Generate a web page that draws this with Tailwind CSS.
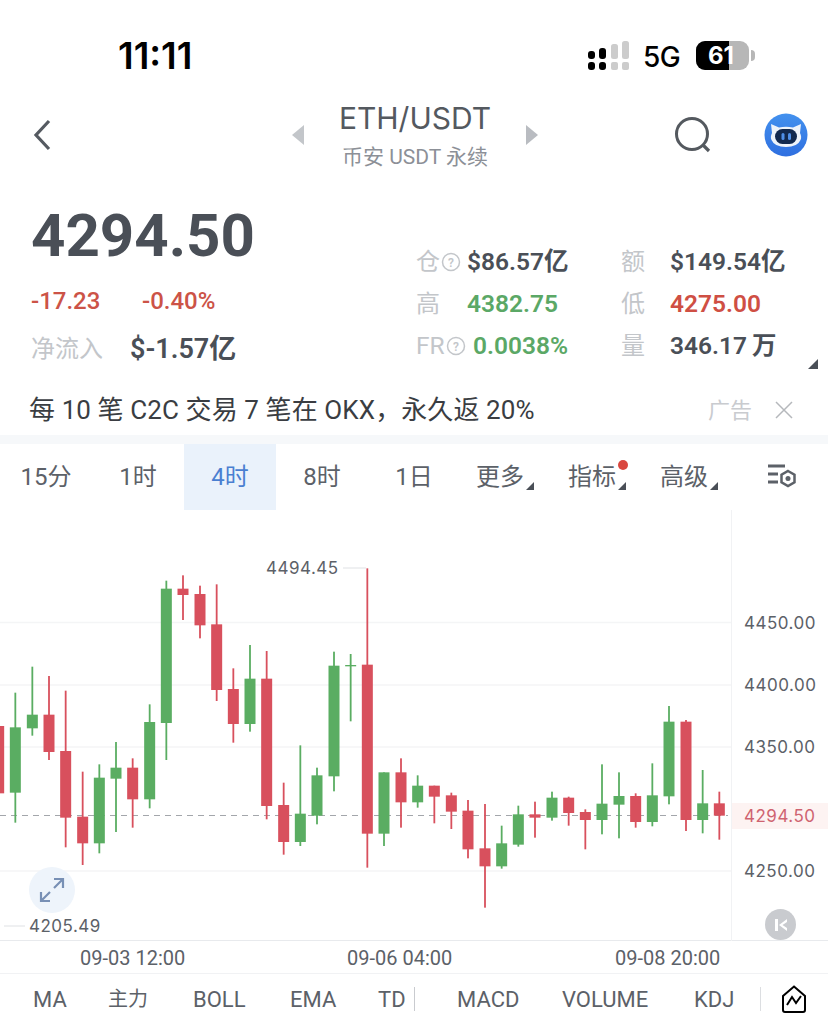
<!DOCTYPE html>
<html lang="zh-CN">
<head>
    <meta charset="UTF-8">
    <meta name="viewport" content="width=device-width, initial-scale=1.0">
    <title>ETH/USDT</title>
    <script src="https://cdn.jsdelivr.net/npm/@tailwindcss/browser@4"></script>
</head>
<body class="bg-white font-['Roboto','Noto_Sans_CJK_SC',sans-serif] text-[#4a4f57]">
<div class="w-[828px] h-[1030px] overflow-hidden flex flex-col">

    <!-- status bar -->
    <div class="h-[100px] shrink-0 flex items-start pt-[36px] relative font-['Inter','Noto_Sans_CJK_SC',sans-serif]">
        <div class="ml-[118px] w-[74px] text-[37px] leading-[40px] font-semibold text-black">11:11</div>
        <svg class="ml-[394px] mt-[3px]" width="44" height="32" viewBox="0 0 44 32">
            <rect x="2" y="12" width="7" height="8" rx="3" fill="#000"/><rect x="2" y="23" width="7" height="8" rx="3" fill="#000"/>
            <rect x="13" y="9" width="7" height="11" rx="3" fill="#000"/><rect x="13" y="23" width="7" height="8" rx="3" fill="#000"/>
            <rect x="25" y="5" width="7" height="15" rx="2.5" fill="#ccc"/><rect x="25" y="23" width="7" height="8" rx="2" fill="#ccc"/>
            <rect x="36" y="2" width="7" height="18" rx="2.5" fill="#ccc"/><rect x="36" y="23" width="7" height="8" rx="2" fill="#ccc"/>
        </svg>
        <div class="ml-[13px] w-[38px] text-[28px] leading-[42px] font-medium text-black tracking-[-0.5px]">5G</div>
        <div class="ml-[15px] mt-[5px] w-[53px] h-[29px] rounded-[9px] overflow-hidden bg-[#b7b7b7] relative">
            <div class="w-[33px] h-full bg-black"></div>
            <div class="absolute inset-0 flex items-center pl-[12px] text-[24px] font-bold text-white">61</div>
        </div>
        <div class="ml-[2px] mt-[14px] w-[4px] h-[11px] rounded-r-full bg-[#b7b7b7]"></div>
    </div>

    <!-- nav -->
    <div class="h-[90px] shrink-0 flex items-center">
        <div class="w-[292px] pl-[33px] pb-[21px]">
            <svg width="18" height="32" viewBox="0 0 18 32" fill="none"><path d="M16 2 3 16l13 14" stroke="#555a61" stroke-width="3.2"/></svg>
        </div>
        <div class="w-[12px] pb-[21px]"><svg width="12" height="20" viewBox="0 0 12 20"><path d="M12 0v20L0 10z" fill="#c3c6ca"/></svg></div>
        <div class="w-[222px] text-center pb-[20px]">
            <div class="text-[30px] leading-[36px] text-[#54595f] font-['Inter']">ETH/USDT</div>
            <div class="text-[21px] leading-[28px] mt-[7px] text-[#8c9097]">币安 USDT 永续</div>
        </div>
        <div class="w-[12px] pb-[21px]"><svg width="12" height="20" viewBox="0 0 12 20"><path d="M0 0v20l12-10z" fill="#b9bcc1"/></svg></div>
        <div class="ml-[136px] pb-[21px]">
            <svg width="38" height="38" viewBox="0 0 38 38" fill="none"><circle cx="18" cy="18" r="15.5" stroke="#54595f" stroke-width="3"/><path d="m29 29 6 6" stroke="#54595f" stroke-width="3.2"/></svg>
        </div>
        <div class="ml-[52px] pb-[21px]">
            <svg width="44" height="44" viewBox="0 0 44 44">
                <defs><linearGradient id="logo" x1="0" y1="0" x2="0" y2="1"><stop offset="0" stop-color="#4391ee"/><stop offset="1" stop-color="#2f6fe0"/></linearGradient></defs>
                <circle cx="22" cy="22" r="21.5" fill="url(#logo)"/>
                <path d="M7 11l8 3.500q7-1.500 14 0l8-3.500-1 9q2 4 .5 7-3 7-14.500 7t-14.500-7q-1.500-3 .5-7z" fill="#eef3fa"/>
                <rect x="11" y="16" width="22" height="15" rx="7.500" fill="#12294f"/>
                <rect x="17.500" y="20" width="3" height="7" rx="1.500" fill="#4f8fe8"/><rect x="24" y="20" width="3" height="7" rx="1.500" fill="#4f8fe8"/>
            </svg>
        </div>
    </div>

    <!-- stats -->
    <div class="h-[195px] shrink-0 flex relative">
        <div class="w-[416px] pl-[31px] pt-[13px]">
            <div class="text-[60px] leading-[66px] font-bold text-[#4a4f57]">4294.50</div>
            <div class="flex mt-[18px] text-[24px] leading-[28px] font-medium text-[#cc5347]">
                <span class="w-[111px]">-17.23</span><span>-0.40%</span>
            </div>
            <div class="flex items-center mt-[17px] h-[34px]">
                <span class="w-[99px] text-[24px] text-[#c3c6ca]">净流入</span>
                <span class="text-[27px] font-semibold text-[#4a4f57]">$-1.57亿</span>
            </div>
        </div>
        <div class="pt-[51px] grid grid-cols-[205px_1fr] auto-rows-[42px] items-center text-[24.5px] font-semibold">
            <div class="flex items-center">
                <span class="w-[51px] flex items-center">
                    <span class="text-[#c3c6ca] font-normal text-[24px]">仓</span>
                    <svg class="ml-[1px]" width="20" height="20" viewBox="0 0 20 20" fill="none"><circle cx="10" cy="10" r="8.500" stroke="#c3c6ca" stroke-width="1.500"/><text x="10" y="14.500" text-anchor="middle" font-size="12" fill="#c3c6ca">?</text></svg>
                </span>
                <span>$86.57亿</span>
            </div>
            <div class="flex items-center">
                <span class="w-[49px] text-[#c3c6ca] font-normal text-[24px]">额</span><span>$149.54亿</span>
            </div>
            <div class="flex items-center">
                <span class="w-[51px] text-[#c3c6ca] font-normal text-[24px]">高</span><span class="text-[#5ba866]">4382.75</span>
            </div>
            <div class="flex items-center">
                <span class="w-[49px] text-[#c3c6ca] font-normal text-[24px]">低</span><span class="text-[#cf4f44]">4275.00</span>
            </div>
            <div class="flex items-center">
                <span class="w-[57px] flex items-center">
                    <span class="text-[#c3c6ca] font-normal">FR</span>
                    <svg class="ml-[1px]" width="20" height="20" viewBox="0 0 20 20" fill="none"><circle cx="10" cy="10" r="8.500" stroke="#c3c6ca" stroke-width="1.500"/><text x="10" y="14.500" text-anchor="middle" font-size="12" fill="#c3c6ca">?</text></svg>
                </span>
                <span class="text-[#5ba866]">0.0038%</span>
            </div>
            <div class="flex items-center">
                <span class="w-[49px] text-[#c3c6ca] font-normal text-[24px]">量</span><span>346.17&#8201;万</span>
            </div>
        </div>
        <svg class="absolute left-[808px] top-[169px]" width="10" height="10" viewBox="0 0 10 10"><path d="M10 0v10H0z" fill="#4a4f57"/></svg>
    </div>

    <!-- ad -->
    <div class="h-[50px] shrink-0 flex items-center pl-[29px]">
        <span class="text-[26px] tracking-[0.1px] text-[#3a3d42]">每 10 笔 C2C 交易 7 笔在 OKX，永久返 20%</span>
        <span class="ml-auto text-[22px] text-[#c9cbcf]">广告</span>
        <svg class="ml-[23px] mr-[35px]" width="18" height="18" viewBox="0 0 18 18" fill="none"><path d="m1 1 16 16M17 1 1 17" stroke="#b5b8bc" stroke-width="1.500"/></svg>
    </div>
    <div class="h-[9px] shrink-0 bg-[#f6f8fa]"></div>

    <!-- period tabs -->
    <div class="h-[66px] shrink-0 flex items-stretch text-[24px] text-[#5c6168]">
        <div class="w-[92px] flex items-center justify-center">15分</div>
        <div class="w-[92px] flex items-center justify-center">1时</div>
        <div class="w-[92px] flex items-center justify-center bg-[#eaf2fb] text-[#4a7fd1]">4时</div>
        <div class="w-[92px] flex items-center justify-center">8时</div>
        <div class="w-[92px] flex items-center justify-center">1日</div>
        <div class="w-[92px] flex items-center justify-center relative pr-[12px]">更多<span class="absolute left-[66px] top-[38px] w-[8px] h-[8px] bg-[#4a4f57] [clip-path:polygon(100%_0,100%_100%,0_100%)]"></span></div>
        <div class="w-[92px] flex items-center justify-center relative pr-[12px]">指标<span class="absolute left-[66px] top-[38px] w-[8px] h-[8px] bg-[#4a4f57] [clip-path:polygon(100%_0,100%_100%,0_100%)]"></span><span class="absolute left-[66px] top-[16px] w-[10px] h-[10px] rounded-full bg-[#d9473f]"></span></div>
        <div class="w-[92px] flex items-center justify-center relative pr-[12px]">高级<span class="absolute left-[66px] top-[38px] w-[8px] h-[8px] bg-[#4a4f57] [clip-path:polygon(100%_0,100%_100%,0_100%)]"></span></div>
        <div class="flex-1 flex items-center pl-[31px]">
            <svg width="30" height="28" viewBox="0 0 30 28" fill="none">
                <path d="M1 3h17M1 11h10M1 19h10" stroke="#5c6168" stroke-width="3"/>
                <path d="m21 8 6.500 3.700v7.600L21 23l-6.500-3.700v-7.600z" stroke="#5c6168" stroke-width="2.500"/>
                <circle cx="21" cy="15.500" r="2.500" fill="#5c6168"/>
            </svg>
        </div>
    </div>

    <!-- chart -->
    <div class="h-[431px] shrink-0 relative border-b border-[#e8eaed] font-['Inter']">
        <svg id="chart" class="absolute inset-0" width="828" height="431" viewBox="0 510 828 431"></svg>
        <div class="absolute left-[266px] top-[47px] text-[17px] leading-[22px] tracking-[0.5px] text-[#5c6168]">4494.45</div>
        <div class="absolute left-[29px] top-[405px] text-[17px] leading-[22px] tracking-[0.5px] text-[#5c6168]">4205.49</div>
        <div class="absolute left-[744px] top-[102px] text-[17px] leading-[22px] tracking-[0.5px] text-[#5c6168]">4450.00</div>
        <div class="absolute left-[744px] top-[164px] text-[17px] leading-[22px] tracking-[0.5px] text-[#5c6168]">4400.00</div>
        <div class="absolute left-[744px] top-[226px] text-[17px] leading-[22px] tracking-[0.5px] text-[#5c6168]">4350.00</div>
        <div class="absolute left-[732px] top-[293px] w-[96px] h-[26px] pl-[12px] bg-[#fdf3f2] text-[17px] leading-[26px] tracking-[0.5px] text-[#cf6370]">4294.50</div>
        <div class="absolute left-[744px] top-[350px] text-[17px] leading-[22px] tracking-[0.5px] text-[#5c6168]">4250.00</div>
        <div class="absolute left-[29px] top-[357px] w-[46px] h-[46px] rounded-full bg-[#eef4fb] flex items-center justify-center">
            <svg width="26" height="26" viewBox="0 0 26 26" fill="none" stroke="#7890b5" stroke-width="2.200"><path d="M15 2h9v9M24 2 15 11M11 24H2v-9M2 24l9-9"/></svg>
        </div>
        <div class="absolute left-[765px] top-[399px] w-[31px] h-[31px] rounded-full bg-[#c9cbcf] flex items-center justify-center">
            <svg width="14" height="14" viewBox="0 0 14 14" fill="#fff"><rect x="1" y="1" width="3" height="12"/><path d="M13 1v3L8.500 7 13 10v3L5 7z"/></svg>
        </div>
    </div>

    <!-- time axis -->
    <div class="h-[33px] shrink-0 relative border-b border-[#f1f2f4] text-[20px] leading-[34px] text-[#5c6168]">
        <span class="absolute left-[80px]">09-03 12:00</span>
        <span class="absolute left-[347px]">09-06 04:00</span>
        <span class="absolute left-[615px]">09-08 20:00</span>
    </div>

    <!-- indicators -->
    <div class="flex-1 flex items-center text-[22px] whitespace-nowrap text-[#5c6168] pb-[6px] pl-[33px]">
        <span class="w-[31px]">MA</span>
        <span class="ml-[44px] w-[40px] text-[20px]">主力</span>
        <span class="ml-[45px] w-[52px]">BOLL</span>
        <span class="ml-[45px] w-[45px]">EMA</span>
        <span class="ml-[43px] w-[27px]">TD</span>
        <span class="ml-[9px] w-[1px] h-[24px] bg-[#c9cbcf]"></span>
        <span class="ml-[42px] w-[62px]">MACD</span>
        <span class="ml-[43px] w-[88px]">VOLUME</span>
        <span class="ml-[44px] w-[39px]">KDJ</span>
        <span class="ml-[27px] w-[1px] h-[24px] bg-[#dcdee1]"></span>
        <svg class="ml-[21px]" width="24" height="28" viewBox="0 0 24 28" fill="none" stroke="#000" stroke-width="2"><path d="M12 1.500 23 11v14a2 2 0 0 1-2 2H3a2 2 0 0 1-2-2V11z"/><path d="m5 20 5-8 4 6 5-7"/></svg>
    </div>
</div>

<script>
    // page coordinates: x = left + zx / 3, y = 550 + zy / 3
    const svg = document.getElementById('chart');
    const RED = '#d8505d', GREEN = '#5aad62';

    // [center, wick top, body top, body bottom, wick bottom, colour]
    const left = [
        [-4, 528, 528, 730, 730, 'r'], [46, 428, 532, 728, 818, 'g'], [97, 350, 494, 535, 557, 'g'],
        [147, 378, 494, 606, 630, 'r'], [197, 422, 603, 803, 892, 'r'], [248, 665, 800, 880, 945, 'r'],
        [298, 643, 683, 880, 910, 'g'], [348, 576, 653, 686, 846, 'g'], [398, 625, 653, 748, 833, 'r'],
        [449, 463, 516, 748, 775, 'g'], [499, 92, 116, 519, 630, 'g'], [549, 76, 116, 135, 210, 'r'],
        [600, 107, 132, 226, 265, 'r'], [650, 103, 223, 420, 453, 'r'], [700, 355, 417, 522, 578, 'r'],
        [750, 285, 386, 522, 545, 'g'], [800, 303, 386, 768, 808, 'r'], [851, 698, 765, 876, 914, 'r'],
        [901, 586, 791, 876, 888, 'g'], [951, 653, 676, 797, 823, 'g'], [1002, 305, 347, 679, 724, 'g'],
        [1052, 312, 345, 349, 514, 'g'], [1102, 55, 344, 851, 953, 'r'], [1152, 667, 667, 851, 888, 'g'],
        [1203, 625, 667, 757, 833, 'r']
    ];
    const right = [
        [53, 676, 707, 757, 773, 'g'], [103, 707, 707, 740, 820, 'r'], [154, 728, 736, 785, 837, 'r'],
        [204, 750, 782, 898, 925, 'r'], [255, 762, 895, 949, 1073, 'r'], [305, 827, 880, 949, 956, 'g'],
        [355, 767, 793, 884, 890, 'g'], [405, 755, 793, 803, 863, 'r'], [456, 725, 743, 803, 812, 'g'],
        [506, 740, 743, 789, 827, 'r'], [556, 778, 786, 810, 898, 'r'], [606, 643, 761, 810, 853, 'g'],
        [657, 667, 738, 764, 865, 'g'], [707, 730, 738, 816, 833, 'r'], [757, 640, 736, 816, 829, 'g'],
        [807, 468, 515, 739, 763, 'g'], [858, 510, 515, 810, 843, 'r'], [908, 660, 760, 810, 850, 'g'],
        [958, 725, 760, 797, 869, 'r']
    ];

    let out = '';
    // grid lines
    [622.5, 685, 747, 871].forEach(y => {
        out += `<line x1="0" x2="731" y1="${y}" y2="${y}" stroke="#f4f5f6" stroke-width="1.5"/>`;
    });
    out += '<line x1="731.5" x2="731.5" y1="510" y2="941" stroke="#f1f2f4"/>';
    out += '<line x1="0" x2="728" y1="815.5" y2="815.5" stroke="#a3a6ab" stroke-dasharray="6 5"/>';
    out += '<line x1="343" x2="366" y1="568" y2="568" stroke="#dfe1e4"/>';
    out += '<line x1="4" x2="25" y1="926" y2="926" stroke="#dfe1e4"/>';

    const draw = (c, offset) => {
        const x = offset + c[0] / 3, col = c[5] === 'r' ? RED : GREEN;
        const yy = v => 550 + v / 3;
        out += `<rect x="${x - 0.9}" y="${yy(c[1])}" width="1.8" height="${(c[4] - c[1]) / 3}" fill="${col}"/>`;
        out += `<rect x="${x - 5.5}" y="${yy(c[2])}" width="11" height="${(c[3] - c[2]) / 3}" fill="${col}"/>`;
    };
    left.forEach(c => draw(c, 0));
    right.forEach(c => draw(c, 400));
    svg.innerHTML = out;
</script>
</body>
</html>
